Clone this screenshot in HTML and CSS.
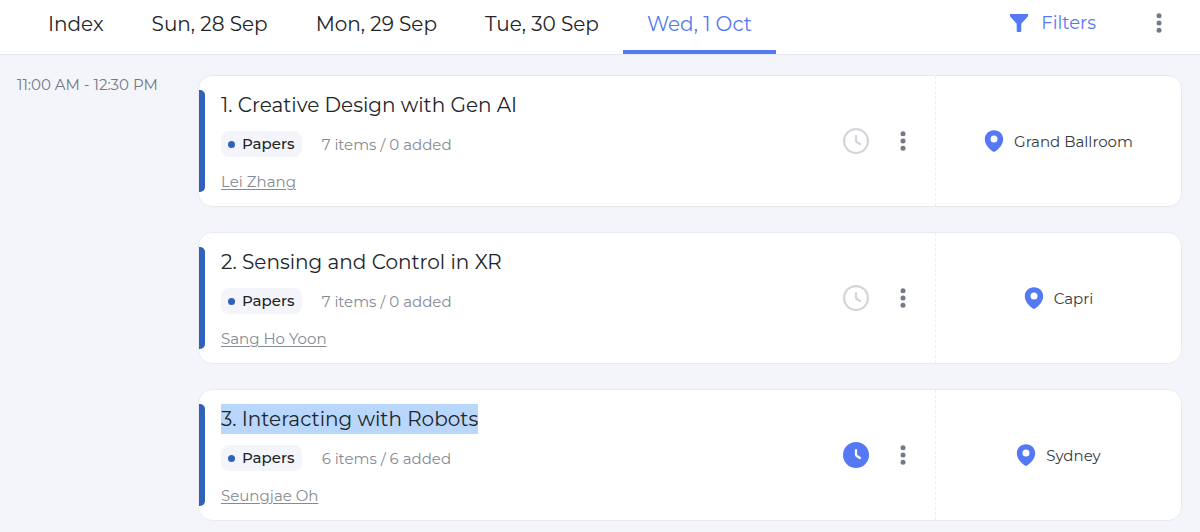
FILE: index.html
```html
<!DOCTYPE html>
<html lang="en">
<head>
<meta charset="utf-8">
<meta name="viewport" content="width=device-width, initial-scale=1">
<title>Program</title>
<link rel="stylesheet" href="styles.css">
</head>
<body>
<svg class="sprite" aria-hidden="true">
  <symbol id="dots" viewBox="0 0 6 20"><circle cx="3" cy="2.700" r="2.500"/><circle cx="3" cy="10" r="2.500"/><circle cx="3" cy="17.300" r="2.500"/></symbol>
  <symbol id="pin" viewBox="0 0 20 22"><path fill-rule="evenodd" d="M10 .3C4.700 .3 .8 4.200 .8 9.200c0 5.300 4.500 9.700 7.700 12a2.500 2.500 0 0 0 3 0c3.200-2.300 7.700-6.700 7.700-12C19.200 4.200 15.300 .3 10 .3zm0 5.200a3.500 3.500 0 1 1 0 7 3.500 3.500 0 0 1 0-7z"/></symbol>
  <symbol id="funnel" viewBox="0 0 18 18"><path d="M.5 0h17q.5 0 .5.500v1.300q0 .6-.4 1L11.300 9.800V17q0 1-1 1H7.700q-1 0-1-1V9.800L.4 2.800Q0 2.400 0 1.800V.5Q0 0 .5 0z"/></symbol>
  <symbol id="clock" viewBox="0 0 26 26"><circle class="clock-face" cx="13" cy="13" r="11.900"/><path class="clock-hands" d="M13 8v4.500q0 1 .8 1.500l3.200 2"/></symbol>
</svg>
<header class="topbar">
  <nav class="tabs" aria-label="Days">
    <a class="tab" href="#index">Index</a>
    <a class="tab" href="#sun">Sun, 28 Sep</a>
    <a class="tab" href="#mon">Mon, 29 Sep</a>
    <a class="tab" href="#tue">Tue, 30 Sep</a>
    <a class="tab tab-active" href="#wed" aria-current="page">Wed, 1 Oct</a>
  </nav>
  <div class="tools">
    <button class="filters" type="button"><svg class="funnel"><use href="#funnel"/></svg>Filters</button>
    <button class="more" type="button" aria-label="More options"><svg class="dots"><use href="#dots"/></svg></button>
  </div>
</header>
<main class="schedule">
  <time class="slot">11:00 AM - 12:30 PM</time>
  <div class="sessions">
    <article class="card">
      <div class="main">
        <div class="info">
          <h2 class="title">1. Creative Design with Gen AI</h2>
          <div class="meta"><span class="pill">Papers</span><span class="count">7 items / 0 added</span></div>
          <a class="chair" href="#lei-zhang">Lei Zhang</a>
        </div>
        <button class="toggle" type="button" aria-label="Add to agenda"><svg class="clock"><use href="#clock"/></svg></button>
        <button class="more" type="button" aria-label="Session options"><svg class="dots"><use href="#dots"/></svg></button>
      </div>
      <div class="room"><svg class="pin"><use href="#pin"/></svg>Grand Ballroom</div>
    </article>
    <article class="card">
      <div class="main">
        <div class="info">
          <h2 class="title">2. Sensing and Control in XR</h2>
          <div class="meta"><span class="pill">Papers</span><span class="count">7 items / 0 added</span></div>
          <a class="chair" href="#sang-ho-yoon">Sang Ho Yoon</a>
        </div>
        <button class="toggle" type="button" aria-label="Add to agenda"><svg class="clock"><use href="#clock"/></svg></button>
        <button class="more" type="button" aria-label="Session options"><svg class="dots"><use href="#dots"/></svg></button>
      </div>
      <div class="room"><svg class="pin"><use href="#pin"/></svg>Capri</div>
    </article>
    <article class="card">
      <div class="main">
        <div class="info">
          <h2 class="title"><mark class="selected">3. Interacting with Robots</mark></h2>
          <div class="meta"><span class="pill">Papers</span><span class="count">6 items / 6 added</span></div>
          <a class="chair" href="#seungjae-oh">Seungjae Oh</a>
        </div>
        <button class="toggle toggle-on" type="button" aria-label="Remove from agenda"><svg class="clock"><use href="#clock"/></svg></button>
        <button class="more" type="button" aria-label="Session options"><svg class="dots"><use href="#dots"/></svg></button>
      </div>
      <div class="room"><svg class="pin"><use href="#pin"/></svg>Sydney</div>
    </article>
  </div>
</main>
</body>
</html>
```
FILE: styles.css
```css
* { box-sizing: border-box; }
body {
  margin: 0;
  background: #f4f5fa;
  color: #212529;
  font-family: Montserrat, Inter, "Open Sans", sans-serif;
  font-size: 15px;
}
.sprite { position: absolute; width: 0; height: 0; }
button {
  display: flex;
  align-items: center;
  justify-content: center;
  padding: 0;
  border: 0;
  background: none;
  font: inherit;
  cursor: pointer;
}
.topbar {
  display: flex;
  justify-content: space-between;
  padding: 0 32px 0 24px;
  background: #fff;
  border-bottom: 1px solid #e8e9ee;
}
.tabs { display: flex; }
.tab {
  padding: 10px 24px 12px;
  border-bottom: 4px solid transparent;
  color: #212529;
  font-size: 20px;
  line-height: 28px;
  text-decoration: none;
  white-space: nowrap;
}
.tab-active { color: #5579f4; border-bottom-color: #5579f4; }
.tools { display: flex; gap: 54px; padding-bottom: 9px; }
.filters { gap: 13px; color: #5579f4; font-size: 18px; }
.funnel { width: 18px; height: 18px; fill: #5579f4; }
.more { width: 18px; }
.dots { width: 6px; height: 20px; fill: #737985; }
.schedule {
  display: grid;
  grid-template-columns: 163px 1fr;
  gap: 18px;
  padding: 20px 18px 11px 17px;
}
.slot { color: #737985; line-height: 20px; white-space: nowrap; }
.sessions { display: grid; gap: 25px; }
.card {
  display: grid;
  grid-template-columns: minmax(0, 1fr) 246px;
  background: #fff;
  border: 1px solid #e9eaf0;
  border-radius: 14px;
}
.main { display: flex; align-items: center; padding: 14px 23px 14px 0; }
.main::before {
  content: "";
  align-self: stretch;
  width: 6px;
  border-radius: 0 5px 5px 0;
  background: #3061bd;
}
.info {
  flex: 1;
  padding-left: 16px;
  display: flex;
  flex-direction: column;
  align-items: flex-start;
}
.title { margin: 0; font-size: 20px; font-weight: 400; line-height: 30px; }
.selected { display: block; background: #b9d6fb; color: inherit; }
.meta { display: flex; align-items: center; gap: 20px; margin: 11px 0 15px; }
.pill {
  display: flex;
  align-items: center;
  gap: 7px;
  padding: 0 7px;
  border-radius: 8px;
  background: #f4f5fa;
  font-weight: 500;
  line-height: 26px;
}
.pill::before { content: ""; width: 7px; height: 7px; border-radius: 50%; background: #3061bd; }
.count { color: #858a94; }
.chair { color: #858a94; line-height: 20px; text-underline-offset: 2px; }
.toggle { margin-right: 25px; }
.clock {
  width: 26px;
  height: 26px;
  fill: none;
  stroke: #d3d5dc;
  stroke-width: 2.2;
  stroke-linecap: round;
  stroke-linejoin: round;
}
.toggle-on { --hands: #fff; }
.toggle-on .clock { fill: #5579f4; stroke: #5579f4; }
.clock-hands { fill: none; stroke: var(--hands, #d3d5dc); }
.room {
  display: flex;
  align-items: center;
  justify-content: center;
  gap: 10px;
  border-left: 1px dashed #eceef3;
  color: #343a40;
}
.pin { width: 20px; height: 22px; fill: #5579f4; }
```
